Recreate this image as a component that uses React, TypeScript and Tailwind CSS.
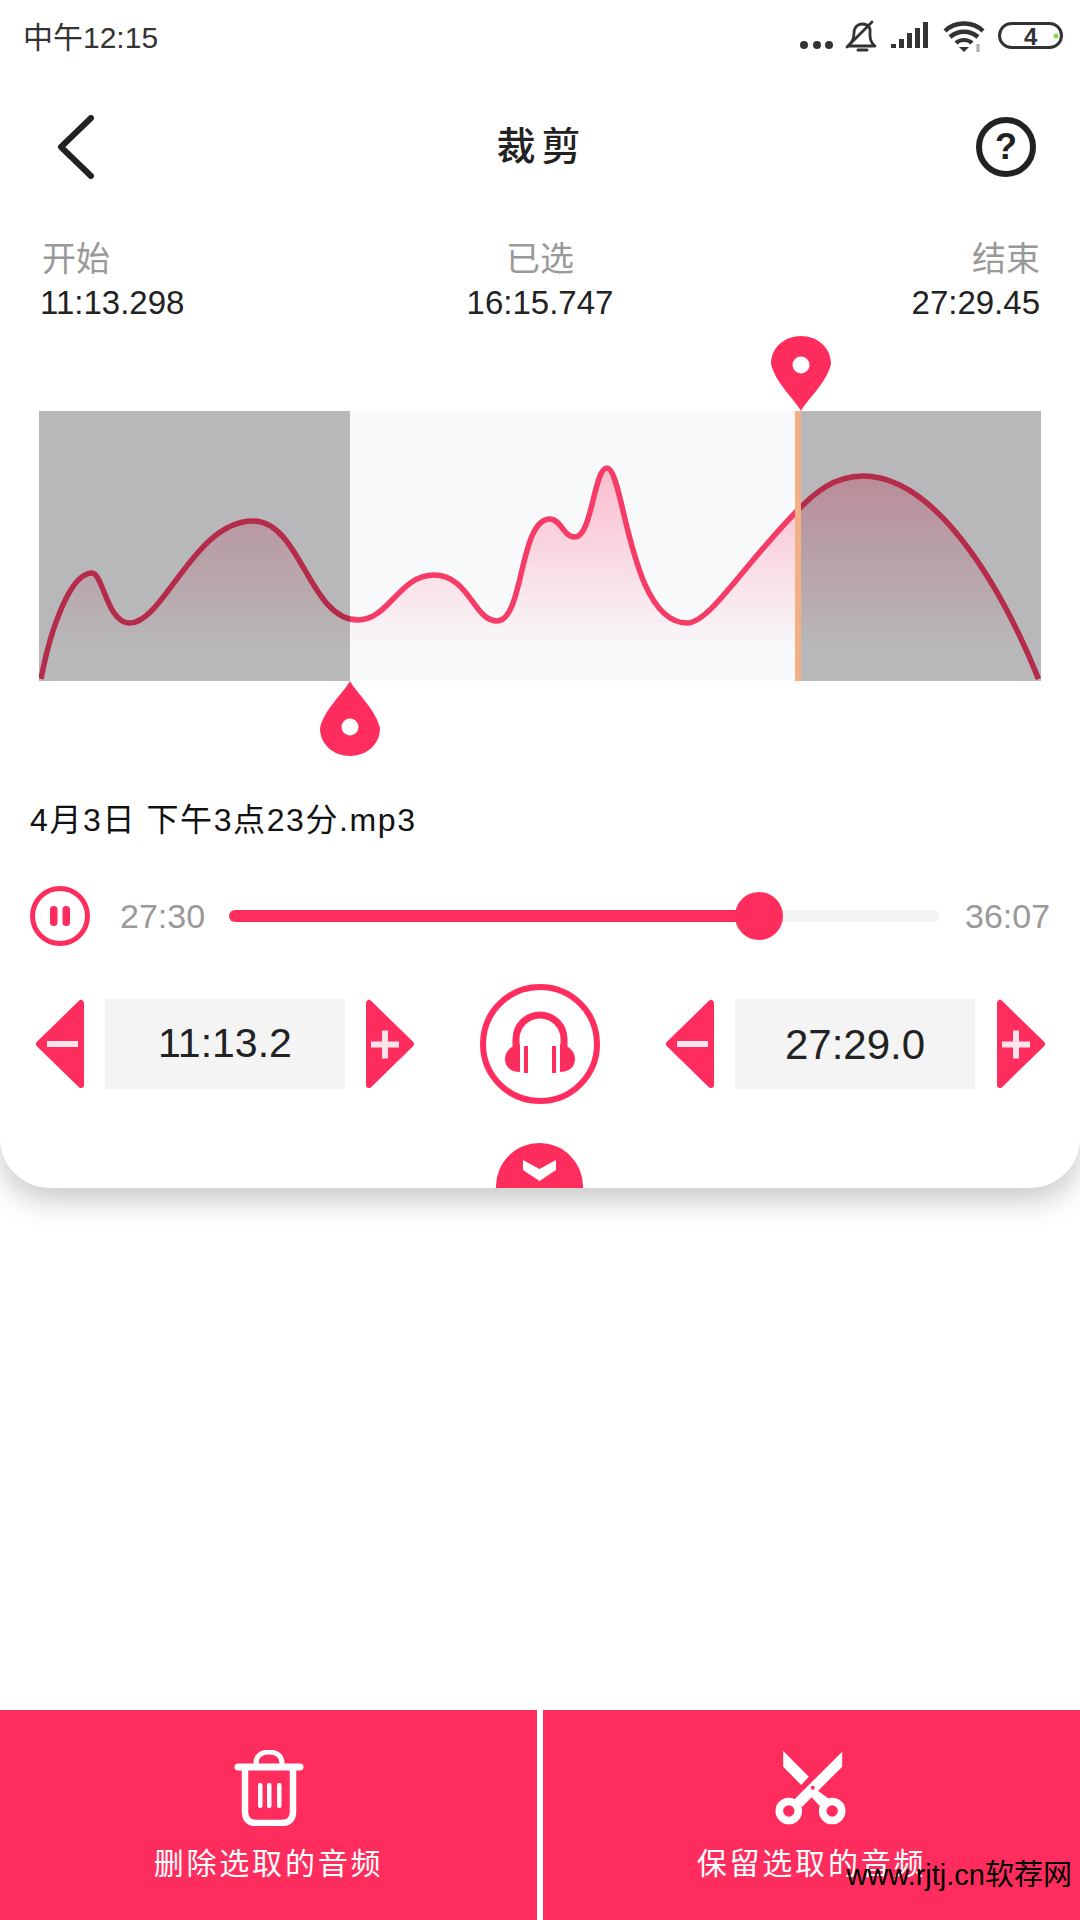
import React from 'react';

const PINK = '#ff2d5e';
const CURVE =
  'M2,268 C12,215 32,162 53,162 C64,162 68,212 90.5,212 C125,212 155,110 214,110 C262,110 270,209 319,209 C350,209 360,164 395,164 C430,164 435,210 458,210 C485,210 480,108 511,108 C522,108 524,126 536,126 C553,126 555,57 568,57 C585,57 590,212 648,212 C670,212 700,160 756,102 C775,82 795,65 824,65 C895,65 960,170 999.5,268';

function StatusIcons() {
  return (
    <svg width="270" height="34" viewBox="0 0 270 34" className="block">
      {/* offset: x 798, y 20 */}
      <circle cx="6" cy="25" r="4" fill="#333" />
      <circle cx="19" cy="25" r="4" fill="#333" />
      <circle cx="31" cy="25" r="4" fill="#333" />
      {/* muted bell */}
      <path d="M50 26 C55 22 56 18 56 13 C56 7 60 4 64 4 C68 4 71 6 72 9 L72 15 C72 20 73 23 77 26 Z" fill="none" stroke="#333" strokeWidth="2.8" strokeLinejoin="round" />
      <path d="M49 27 L74 2" stroke="#333" strokeWidth="2.8" strokeLinecap="round" />
      <path d="M60 30 H69" stroke="#333" strokeWidth="3" strokeLinecap="round" />
      {/* signal */}
      <rect x="93" y="24" width="5" height="4" fill="#333" />
      <rect x="101" y="19" width="5" height="9" fill="#333" />
      <rect x="109" y="13" width="5" height="15" fill="#333" />
      <rect x="117" y="8" width="5" height="20" fill="#333" />
      <rect x="125" y="2" width="5" height="26" fill="#333" />
      {/* wifi */}
      <path d="M147 11 C157 1 175 1 185 11" fill="none" stroke="#333" strokeWidth="4.4" />
      <path d="M152 17 C160 10 172 10 180 17" fill="none" stroke="#333" strokeWidth="4.4" />
      <path d="M158 23 C162 19 170 19 174 23" fill="none" stroke="#333" strokeWidth="4.2" />
      <path d="M166 32 L161 27 H171 Z" fill="#333" />
      <path d="M180 24 V32" stroke="#aaa" strokeWidth="3" />
      {/* battery */}
      <rect x="201.500" y="3.500" width="62" height="24" rx="12" fill="none" stroke="#333" strokeWidth="3" />
      <circle cx="258" cy="16" r="2.500" fill="#7ed957" />
    </svg>
  );
}

function Stepper({ kind }: { kind: 'minus' | 'plus' }) {
  const isMinus = kind === 'minus';
  return (
    <svg width="50" height="90" viewBox="0 0 50 90" className="block shrink-0">
      {isMinus ? (
        <>
          <path d="M46 4 V86 L4 45 Z" fill={PINK} stroke={PINK} strokeWidth="6" strokeLinejoin="round" />
          <rect x="12" y="42" width="31" height="6" fill="#ffe3ea" />
        </>
      ) : (
        <>
          <path d="M4 4 V86 L46 45 Z" fill={PINK} stroke={PINK} strokeWidth="6" strokeLinejoin="round" />
          <rect x="6" y="42.500" width="28" height="6" fill="#ffe3ea" />
          <rect x="17" y="31.500" width="6" height="28" fill="#ffe3ea" />
        </>
      )}
    </svg>
  );
}

function Headphones() {
  return (
    <svg width="120" height="120" viewBox="0 0 120 120" className="block shrink-0">
      <circle cx="60" cy="60" r="57" fill="none" stroke={PINK} strokeWidth="6" />
      <path d="M36 64 V55 A24 24 0 0 1 84 55 V64" fill="none" stroke={PINK} strokeWidth="7" />
      <path d="M40 60 C30 62 25 68 25 75 C25 83 31 88 40 88 Z" fill={PINK} />
      <path d="M80 60 C90 62 95 68 95 75 C95 83 89 88 80 88 Z" fill={PINK} />
      <rect x="44" y="62" width="4" height="27" fill={PINK} />
      <rect x="72" y="62" width="4" height="27" fill={PINK} />
    </svg>
  );
}

function TrashIcon() {
  return (
    <svg width="70" height="76" viewBox="0 0 70 76" className="block">
      <path d="M22 14 V13 C22 6 27 2 35 2 C43 2 48 6 48 13 V14" fill="none" stroke="#fff" strokeWidth="5" />
      <path d="M4 17 H66" stroke="#fff" strokeWidth="7" strokeLinecap="round" />
      <path d="M11 18 V62 C11 69 15 73 22 73 H48 C55 73 59 69 59 62 V18" fill="none" stroke="#fff" strokeWidth="6.500" />
      <rect x="24" y="33" width="4.500" height="25" rx="2" fill="#fff" />
      <rect x="33" y="33" width="4.500" height="25" rx="2" fill="#fff" />
      <rect x="43" y="33" width="4.500" height="25" rx="2" fill="#fff" />
    </svg>
  );
}

function ScissorsIcon() {
  return (
    <svg width="76" height="76" viewBox="0 0 76 76" className="block">
      <path d="M9.200 1 L34.800 26.700 L27.200 35 L9.200 16.700 Z" fill="#fff" />
      <path d="M68.200 1.700 V16.700 L28.200 56.700 L19.800 50 Z" fill="#fff" />
      <path d="M42.800 40 L56.500 50 L46.500 56.700 L36.500 46 Z" fill="#fff" />
      <circle cx="14.800" cy="61" r="9.500" fill="none" stroke="#fff" strokeWidth="7.600" />
      <circle cx="58.200" cy="61" r="9.500" fill="none" stroke="#fff" strokeWidth="7.600" />
      <circle cx="38.800" cy="37.700" r="2" fill={PINK} />
    </svg>
  );
}

function Waveform() {
  return (
    <div className="relative ml-[39px] mt-[87px] h-[270px] w-[1002px] bg-[#f8f9fb]">
      <svg width="1002" height="270" viewBox="0 0 1002 270" className="absolute inset-0">
        <defs>
          <linearGradient id="wave" gradientUnits="userSpaceOnUse" x1="0" y1="57" x2="0" y2="240">
            <stop offset="0" stopColor={PINK} stopOpacity="0.3" />
            <stop offset="1" stopColor={PINK} stopOpacity="0" />
          </linearGradient>
        </defs>
        <path d={`${CURVE} L999.5,270 L2,270 Z`} fill="url(#wave)" />
        <path d={CURVE} fill="none" stroke="#f53c66" strokeWidth="5.5" />
      </svg>
      <div className="absolute inset-0 flex">
        <div className="w-[311px] bg-[rgba(0,0,0,0.26)]" />
        <div className="w-[445px]" />
        <div className="w-[6px] bg-[#f2b084]" />
        <div className="flex-1 bg-[rgba(0,0,0,0.26)]" />
      </div>
      {/* end handle */}
      <svg width="60" height="75" viewBox="0 0 60 75" className="absolute left-[732px] top-[-75px]">
        <path d="M30 75 C24 64 4 46 0 28 C0 11 14 0 30 0 C46 0 60 11 60 28 C56 46 36 64 30 75 Z" fill={PINK} />
        <ellipse cx="30" cy="29" rx="8.500" ry="8.500" fill="#fff" />
      </svg>
      {/* start handle */}
      <svg width="60" height="75" viewBox="0 0 60 75" className="absolute left-[281px] top-[270px]">
        <path d="M30 0 C36 11 56 29 60 47 C60 64 46 75 30 75 C14 75 0 64 0 47 C4 29 24 11 30 0 Z" fill={PINK} />
        <ellipse cx="30" cy="46" rx="8.500" ry="8.500" fill="#fff" />
      </svg>
    </div>
  );
}

function ActionButton({ label, children }: { label: string; children: React.ReactNode }) {
  return (
    <div className="flex flex-1 flex-col items-center bg-[#ff2d5e] pt-[40px]">
      <div className="flex h-[76px] items-center">{children}</div>
      <div className="mt-[16px] text-[30px] leading-[44px] tracking-[2.800px] text-white">{label}</div>
    </div>
  );
}

export default function App() {
  return (
    <div className="relative flex h-[1920px] w-[1080px] flex-col overflow-hidden bg-white font-['Liberation_Sans','Noto_Sans_CJK_SC',sans-serif]">
      <div className="relative h-[1188px] shrink-0 rounded-b-[50px] bg-white shadow-[0_12px_30px_rgba(0,0,0,0.22)]">
        {/* status bar */}
        <div className="flex h-[74px] items-center justify-between pl-[23px] pr-[12px]">
          <span className="text-[30px] text-[#333]">中午12:15</span>
          <div className="relative">
            <StatusIcons />
            <span className="absolute left-[226px] top-[3px] text-[24px] font-bold leading-[28px] text-[#333]">4</span>
          </div>
        </div>

        {/* header */}
        <div className="flex h-[146px] items-center justify-between pl-[57px] pr-[44px]">
          <svg width="38" height="64" viewBox="0 0 38 64" className="block">
            <path d="M34 3 L4 32 L34 61" fill="none" stroke="#222" strokeWidth="6" strokeLinecap="round" strokeLinejoin="round" />
          </svg>
          <span className="ml-[12px] text-[39px] font-medium tracking-[6px] text-[#222]">裁剪</span>
          <div className="flex h-[60px] w-[60px] items-center justify-center rounded-full border-[6px] border-[#222] text-[36px] font-bold text-[#222]">?</div>
        </div>

        {/* range labels */}
        <div className="mt-[18px] grid grid-cols-3 px-[40px] text-[33px] leading-[43px]">
          <div className="text-left">
            <div className="pl-[2px] text-[34px] text-[#999]">开始</div>
            <div className="text-[#222]">11:13.298</div>
          </div>
          <div className="text-center">
            <div className="text-[34px] text-[#999]">已选</div>
            <div className="text-[#222]">16:15.747</div>
          </div>
          <div className="text-right">
            <div className="text-[34px] text-[#999]">结束</div>
            <div className="text-[#222]">27:29.45</div>
          </div>
        </div>

        <Waveform />

        <div className="ml-[30px] mt-[119px] h-[40px] text-[32px] leading-[40px] tracking-[1.600px] text-[#111]">4月3日 下午3点23分.mp3</div>

        {/* playback row */}
        <div className="mt-[46px] flex h-[60px] items-center pl-[30px]">
          <svg width="60" height="60" viewBox="0 0 60 60" className="block shrink-0">
            <circle cx="30" cy="30" r="27.500" fill="none" stroke={PINK} strokeWidth="5" />
            <rect x="20" y="20" width="7.500" height="20" rx="3.500" fill={PINK} />
            <rect x="32.500" y="20" width="7.500" height="20" rx="3.500" fill={PINK} />
          </svg>
          <span className="ml-[30px] w-[85px] text-[34px] text-[#999]">27:30</span>
          <div className="relative ml-[24px] h-[12px] w-[711px] rounded-full bg-[#f4f4f4]">
            <div className="h-full w-[530px] rounded-full bg-[#ff2d5e]" />
            <div className="absolute left-[506px] top-[-18px] h-[48px] w-[48px] rounded-full bg-[#ff2d5e]" />
          </div>
          <span className="ml-[25px] text-[34px] text-[#999]">36:07</span>
        </div>

        {/* fine adjust row */}
        <div className="mt-[38px] flex h-[120px] items-center pl-[35px]">
          <Stepper kind="minus" />
          <div className="ml-[20px] flex h-[90px] w-[240px] items-center justify-center bg-[#f4f4f4] text-[41px] text-[#222]">11:13.2</div>
          <div className="ml-[20px]"><Stepper kind="plus" /></div>
          <div className="ml-[65px]"><Headphones /></div>
          <div className="ml-[65px]"><Stepper kind="minus" /></div>
          <div className="ml-[20px] flex h-[90px] w-[240px] items-center justify-center bg-[#f4f4f4] text-[42px] text-[#222]">27:29.0</div>
          <div className="ml-[21px]"><Stepper kind="plus" /></div>
        </div>

        {/* collapse tab */}
        <div className="absolute bottom-0 left-[496px] flex h-[45px] w-[87px] items-start justify-center rounded-t-[44px] bg-[#ff2d5e] pt-[17px]">
          <svg width="33" height="21" viewBox="0 0 33 21" className="block">
            <path d="M0 0 L16.500 9 L33 0 V10 L16.500 21 L0 10 Z" fill="#fff" />
          </svg>
        </div>
      </div>

      <div className="flex-1" />

      <div className="flex h-[210px] gap-[6px]">
        <ActionButton label="删除选取的音频"><TrashIcon /></ActionButton>
        <ActionButton label="保留选取的音频"><ScissorsIcon /></ActionButton>
      </div>

      <div className="absolute bottom-[28px] right-[8px] text-[29px] leading-[34px] text-black">www.rjtj.cn软荐网</div>
    </div>
  );
}
